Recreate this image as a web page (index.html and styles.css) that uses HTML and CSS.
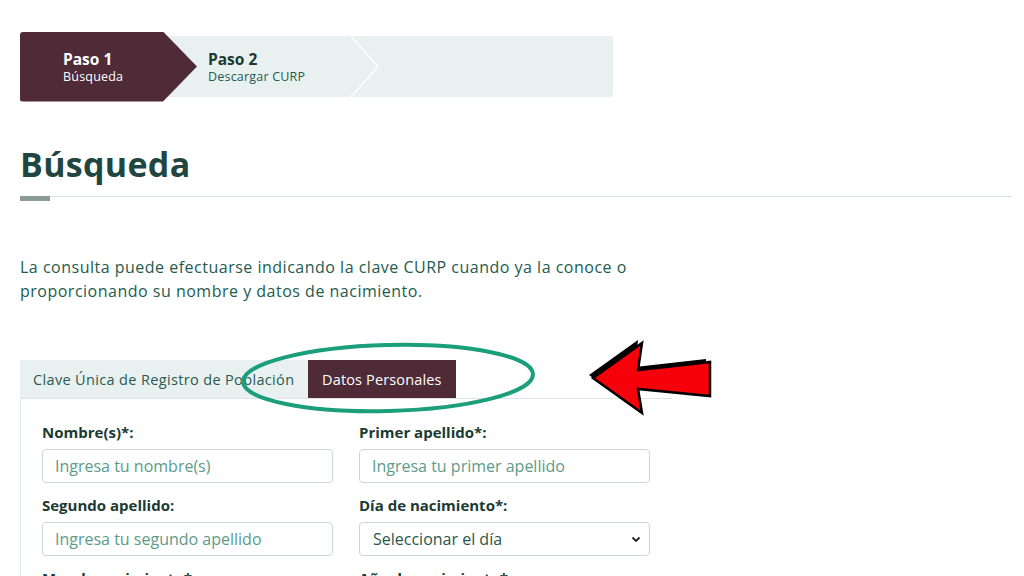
FILE: index.html
```html
<!DOCTYPE html>
<html lang="es">
<head>
<meta charset="utf-8">
<title>Búsqueda CURP</title>
<link rel="stylesheet" href="styles.css">
</head>
<body>
<div class="page">
  <div class="stepper">
    <div class="step step-active">
      <div class="step-title">Paso 1</div>
      <div class="step-sub">Búsqueda</div>
    </div>
    <div class="step step-next">
      <div class="step-title">Paso 2</div>
      <div class="step-sub">Descargar CURP</div>
    </div>
    <svg class="chevron" width="30" height="61" viewBox="0 0 30 61"><polyline points="1,0 28,30.5 1,61" fill="none" stroke="#ffffff" stroke-width="1.5"/></svg>
  </div>

  <h1 class="title">Búsqueda</h1>
  <div class="rule"><span class="rule-mark"></span></div>

  <p class="intro">La consulta puede efectuarse indicando la clave CURP cuando ya la conoce o<br>proporcionando su nombre y datos de nacimiento.</p>

  <div class="tabs-wrap">
    <div class="tabs">
      <div class="tab">Clave Única de Registro de Población</div>
      <div class="tab tab-active">Datos Personales</div>
    </div>
    <div class="form">
      <div class="field">
        <label class="label">Nombre(s)*:</label>
        <div class="input placeholder">Ingresa tu nombre(s)</div>
      </div>
      <div class="field">
        <label class="label">Primer apellido*:</label>
        <div class="input placeholder">Ingresa tu primer apellido</div>
      </div>
      <div class="field">
        <label class="label">Segundo apellido:</label>
        <div class="input placeholder">Ingresa tu segundo apellido</div>
      </div>
      <div class="field">
        <label class="label">Día de nacimiento*:</label>
        <div class="input select">Seleccionar el día
          <svg class="caret" width="10" height="7" viewBox="0 0 10 7"><polyline points="1.5,1.5 5,5 8.5,1.5" fill="none" stroke="#222" stroke-width="1.8"/></svg>
        </div>
      </div>
      <div class="field">
        <label class="label">Mes de nacimiento*:</label>
      </div>
      <div class="field">
        <label class="label">Año de nacimiento*:</label>
      </div>
    </div>
    <svg class="annot" width="720" height="90" viewBox="0 0 720 90">
      <ellipse cx="368" cy="38" rx="145" ry="33" fill="none" stroke="#1a9e7c" stroke-width="4" transform="rotate(-1.5 368 38)"/>
      <polygon points="571,37 620,2 617,29 688,21 688,55 617,50 620,72" fill="#000" transform="translate(-2,-2)"/>
      <polygon points="573,38 622,3 618,30 690,22 690,56 618,49 622,73" fill="#f5000b" stroke="#000" stroke-width="2.5" stroke-linejoin="miter"/>
    </svg>
  </div>
</div>
</body>
</html>
```
FILE: styles.css
```css
html, body {
  margin: 0;
  padding: 0;
  background: #ffffff;
}
body {
  font-family: "Open Sans", "Liberation Sans", sans-serif;
  overflow: hidden;
  height: 576px;
}
.page {
  padding: 0 12px 0 20px;
}
.stepper {
  position: relative;
  margin-top: 36px;
  width: 593px;
  height: 61px;
  background: #e9f1f0;
  border-radius: 3px;
  display: flex;
  align-items: center;
}
.step {
  display: flex;
  flex-direction: column;
  justify-content: center;
}
.step-active {
  width: 134px;
  height: 70px;
  padding-left: 43px;
  background: #4e2b37;
  clip-path: polygon(0 0, 143px 0, 177px 35px, 143px 70px, 0 70px);
  border-radius: 3px 0 0 3px;
  color: #ffffff;
}
.step-next {
  padding-left: 11px;
  color: #1b3a33;
}
.step-title {
  font-size: 15.5px;
  font-weight: 700;
  line-height: 18px;
}
.step-sub {
  font-size: 12.5px;
  line-height: 15px;
  margin-top: 1px;
  letter-spacing: 0.2px;
}
.step-next .step-sub {
  color: #235b4e;
}
.chevron {
  position: absolute;
  left: 330px;
  top: 0;
}
.title {
  margin: 47px 0 0 0;
  font-size: 34px;
  line-height: 41px;
  font-weight: 700;
  color: #1f4640;
  letter-spacing: 0.3px;
}
.rule {
  margin-top: 11px;
  height: 1px;
  background: #dde4e3;
  position: relative;
}
.rule-mark {
  display: block;
  width: 30px;
  height: 5px;
  background: #8b9b95;
}
.intro {
  margin: 58px 0 0 0;
  font-size: 16px;
  line-height: 24px;
  letter-spacing: 0.5px;
  color: #235b4e;
}
.tabs-wrap {
  position: relative;
  margin-top: 57px;
  width: 652px;
}
.tabs {
  display: flex;
  height: 38px;
}
.tab {
  display: flex;
  align-items: center;
  padding: 0 14px 0 13px;
  background: #e9f1f0;
  color: #2a5a4f;
  font-size: 14.5px;
  letter-spacing: 0.35px;
  width: 261px;
  white-space: nowrap;
}
.tab-active {
  width: auto;
  padding: 0 14px;
  letter-spacing: 0.15px;
  background: #4e2b37;
  color: #ffffff;
}
.form {
  border-top: 1px solid #dde4e3;
  border-left: 1px solid #e4eaea;
  padding: 23px 22px 0 21px;
  display: grid;
  grid-template-columns: 291px 291px;
  column-gap: 26px;
  row-gap: 12px;
}
.field {
  display: flex;
  flex-direction: column;
}
.label {
  font-size: 15px;
  font-weight: 700;
  color: #1b3a33;
  line-height: 20px;
  margin-bottom: 7px;
}
.input {
  height: 32px;
  border: 1px solid #cfd6d5;
  border-radius: 4px;
  display: flex;
  align-items: center;
  padding: 0 12px;
  font-size: 16px;
  position: relative;
}
.placeholder {
  color: #5c9b89;
}
.select {
  color: #28574b;
  padding-left: 13px;
}
.caret {
  position: absolute;
  right: 8px;
  top: 13px;
}
.annot {
  position: absolute;
  left: 0;
  top: -20px;
  overflow: visible;
}
```
